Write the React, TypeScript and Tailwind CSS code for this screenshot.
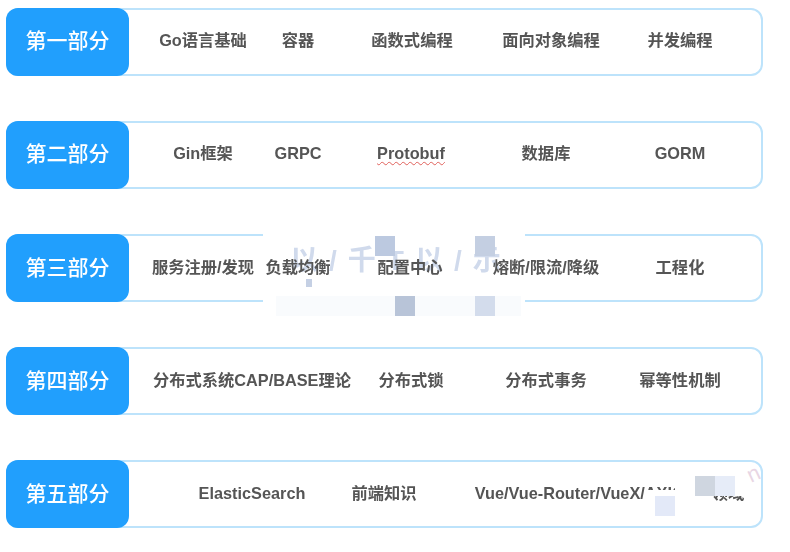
import React from 'react';

interface Item {
  text: string;
  width: string;
  squiggle?: boolean;
  under?: boolean;
}

interface Section {
  title: string;
  pad?: string;
  items: Item[];
}

const sections: Section[] = [
  {
    title: '第一部分',
    items: [
      { text: 'Go语言基础', width: 'w-[148px]' },
      { text: '容器', width: 'w-[42px]' },
      { text: '函数式编程', width: 'w-[186px]' },
      { text: '面向对象编程', width: 'w-[92px]' },
      { text: '并发编程', width: 'w-[166px]' },
    ],
  },
  {
    title: '第二部分',
    items: [
      { text: 'Gin框架', width: 'w-[148px]' },
      { text: 'GRPC', width: 'w-[42px]' },
      { text: 'Protobuf', width: 'w-[184px]', squiggle: true },
      { text: '数据库', width: 'w-[86px]' },
      { text: 'GORM', width: 'w-[182px]' },
    ],
  },
  {
    title: '第三部分',
    items: [
      { text: '服务注册/发现', width: 'w-[148px]' },
      { text: '负载均衡', width: 'w-[42px]' },
      { text: '配置中心', width: 'w-[182px]' },
      { text: '熔断/限流/降级', width: 'w-[90px]' },
      { text: '工程化', width: 'w-[178px]' },
    ],
  },
  {
    title: '第四部分',
    items: [
      { text: '分布式系统CAP/BASE理论', width: 'w-[246px]' },
      { text: '分布式锁', width: 'w-[72px]' },
      { text: '分布式事务', width: 'w-[198px]' },
      { text: '幂等性机制', width: 'w-[70px]' },
    ],
  },
  {
    title: '第五部分',
    pad: 'pl-[53px]',
    items: [
      { text: 'ElasticSearch', width: 'w-[140px]' },
      { text: '前端知识', width: 'w-[124px]' },
      { text: 'Vue/Vue-Router/VueX/AXIOS等领域', width: 'w-[327px]', under: true },
    ],
  },
];

function Row({ section }: { section: Section }) {
  return (
    <div className="flex h-[68px] w-[757px] shrink-0 items-stretch rounded-xl border-2 border-[#bde3fb] bg-white">
      <div className="-my-[2px] -ml-[2px] flex w-[123px] shrink-0 items-center justify-center rounded-xl bg-[#219ffd] pb-px text-[21px] font-medium text-white">
        <span className="blur-[0.4px]">{section.title}</span>
      </div>
      <div className={`flex flex-1 items-center pb-[2px] text-[16.3px] font-bold text-[#555555] ${section.pad ?? ''}`}>
        {section.items.map(item => (
          <div key={item.text} className={`flex shrink-0 justify-center whitespace-nowrap ${item.width}`}>
            <span
              className={`blur-[0.4px] ${item.under ? '' : 'relative z-20'} ${
                item.squiggle ? 'underline decoration-[#e0605a] decoration-wavy decoration-1 underline-offset-2' : ''
              }`}
            >
              {item.text}
            </span>
          </div>
        ))}
      </div>
    </div>
  );
}

// The blurred-out watermark over the third row, drawn below that row's texts
function MiddleWatermark() {
  return (
    <div className="absolute left-[263px] top-[230px] z-10 flex h-[86px] w-[262px] flex-col bg-white">
      <div className="absolute left-[27px] top-[16px] whitespace-nowrap text-[28px] font-bold leading-[30px] tracking-[11px] text-[#d0daec] blur-[0.6px]">
        以/千T以/示
      </div>
      <div className="relative mt-[6px] flex h-5 gap-[80px] pl-[112px]">
        <div className="size-5 bg-[#bcc9e0]" />
        <div className="size-5 bg-[#c4cfe2]" />
      </div>
      <div className="relative ml-[43px] mt-[23px] h-2 w-1.5 bg-[#c5d0e4]" />
      <div className="ml-[13px] mt-[9px] flex h-5 w-[245px] gap-[60px] bg-[#f9fbfd] pl-[119px]">
        <div className="size-5 bg-[#b8c4d8]" />
        <div className="size-5 bg-[#d3dcec]" />
      </div>
    </div>
  );
}

// Same kind of patch at the end of the fifth row, this one hides the text
function CornerWatermark() {
  return (
    <div className="absolute left-[645px] top-[464px] z-30 flex h-[54px] w-[115px] flex-col">
      <div className="ml-[98px] h-0 rotate-[-25deg] text-[22px] font-medium leading-[20px] text-[#e8d6e4]">n</div>
      <div className="relative ml-[30px] mt-[8px] flex h-[24px] w-[70px] bg-white pl-[20px] pt-[4px]">
        <div className="size-5 bg-[#cfd6e0]" />
        <div className="size-5 bg-[#e6ecf8]" />
      </div>
      <div className="-mt-[6px] h-[26px] w-[68px] bg-white pl-[10px] pt-[6px]">
        <div className="size-5 bg-[#e3e9f8]" />
      </div>
    </div>
  );
}

export default function App() {
  return (
    <div className="relative h-[552px] w-[790px] overflow-hidden bg-white font-['Liberation_Sans','Noto_Sans_CJK_SC',sans-serif]">
      <div className="flex flex-col gap-[45.2px] px-[6px] pt-[7.5px]">
        {sections.map(section => (
          <Row key={section.title} section={section} />
        ))}
      </div>
      <MiddleWatermark />
      <CornerWatermark />
    </div>
  );
}
